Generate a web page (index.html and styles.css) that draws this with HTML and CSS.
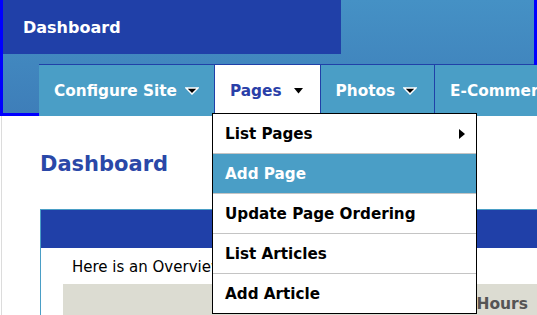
FILE: index.html
```html
<!DOCTYPE html>
<html lang="en">
<head>
    <meta charset="UTF-8">
    <meta name="viewport" content="width=device-width, initial-scale=1.0">
    <title>Dashboard</title>
    <link rel="stylesheet" href="styles.css">
</head>
<body>
    <div id="header">
        <div id="brand">Dashboard</div>
        <ul id="nav">
            <li class="nav-item">
                Configure Site
                <svg class="caret" width="14" height="8" viewBox="0 0 14 8"><polygon points="1,1 13,1 7,7" fill="#000" stroke="#fff" stroke-width="1.5"/></svg>
            </li>
            <li class="nav-item active">
                Pages
                <svg class="caret small" width="9" height="6" viewBox="0 0 9 6"><polygon points="0,0 9,0 4.5,5.5" fill="#000"/></svg>
                <!-- open dropdown -->
                <ul class="dropdown">
                    <li>List Pages
                        <svg class="sub-arrow" width="6" height="10" viewBox="0 0 6 10"><polygon points="0,0 6,5 0,10" fill="#000"/></svg>
                    </li>
                    <li class="hover">Add Page</li>
                    <li>Update Page Ordering</li>
                    <li>List Articles</li>
                    <li>Add Article</li>
                </ul>
            </li>
            <li class="nav-item">
                Photos
                <svg class="caret" width="14" height="8" viewBox="0 0 14 8"><polygon points="1,1 13,1 7,7" fill="#000" stroke="#fff" stroke-width="1.5"/></svg>
            </li>
            <li class="nav-item">E-Commerce</li>
        </ul>
    </div>

    <div id="content">
        <h1>Dashboard</h1>
        <div class="panel">
            <div class="panel-head"></div>
            <div class="panel-body">
                <p>Here is an Overview of your site</p>
                <div class="table-head">
                    <span class="col">Hours</span>
                </div>
            </div>
        </div>
    </div>
</body>
</html>
```

FILE: styles.css
```css
html, body {
    margin: 0;
    padding: 0;
    overflow: hidden;
    font-family: "DejaVu Sans", Verdana, sans-serif;
}

#header {
    border: 3px solid #0000ff;
    border-top: none;
    height: 116px;
    box-sizing: border-box;
    background: linear-gradient(to bottom, #4591c5, #3e7eb9);
}

#brand {
    width: 318px;
    height: 54px;
    padding-left: 20px;
    display: flex;
    align-items: center;
    background-color: #2040a8;
    color: #fff;
    font-weight: bold;
    font-size: 16px;
}

#nav {
    list-style: none;
    margin: 10px 0 0 36px;
    padding: 0;
    display: flex;
    height: 52px;
    box-sizing: border-box;
    border-top: 1px solid #2040a8;
}

.nav-item {
    position: relative;
    display: flex;
    align-items: center;
    gap: 8px;
    padding: 0 17px 0 15px;
    background-color: #4a9ec6;
    border-right: 1px solid #2040a8;
    color: #fff;
    font-weight: bold;
    font-size: 15.3px;
    white-space: nowrap;
}

.nav-item:first-child {
    padding-right: 15px;
}

.nav-item.active {
    background-color: #fff;
    color: #2a3fa8;
    gap: 12px;
    padding-left: 15px;
    padding-right: 17px;
}

.caret {
    display: block;
}

.dropdown {
    position: absolute;
    top: 48px;
    left: -3px;
    width: 263px;
    margin: 0;
    padding: 0;
    list-style: none;
    background-color: #fff;
    border: 1px solid #000;
    z-index: 5;
}

.dropdown li {
    height: 39px;
    display: flex;
    align-items: center;
    justify-content: space-between;
    padding: 0 11px 0 12px;
    border-top: 1px solid #c4c4c4;
    color: #000;
    font-size: 15.2px;
    font-weight: bold;
}

.dropdown li:first-child {
    border-top: none;
}

.dropdown li.hover {
    background-color: #4a9ec6;
    color: #fff;
}

#content {
    border-left: 1px solid #dcdcdc;
    margin-left: 1px;
    padding: 36px 0 0 38px;
    height: 300px;
}

h1 {
    margin: 0 0 32px;
    color: #2a48a8;
    font-size: 21px;
    line-height: 25px;
    font-weight: bold;
}

.panel {
    width: 540px;
    border: 1px solid #4a9ec6;
}

.panel-head {
    height: 38px;
    background-color: #2040a8;
}

.panel-body {
    padding: 10px 0 0 22px;
}

.panel-body p {
    margin: 0 0 7px 9px;
    font-size: 15px;
    line-height: 19px;
    color: #000;
}

.table-head {
    width: 465px;
    height: 40px;
    padding-right: 17px;
    display: flex;
    align-items: center;
    justify-content: flex-end;
    background-color: #dcdcd2;
}

.col {
    color: #555;
    font-weight: bold;
    font-size: 15.5px;
}
```
